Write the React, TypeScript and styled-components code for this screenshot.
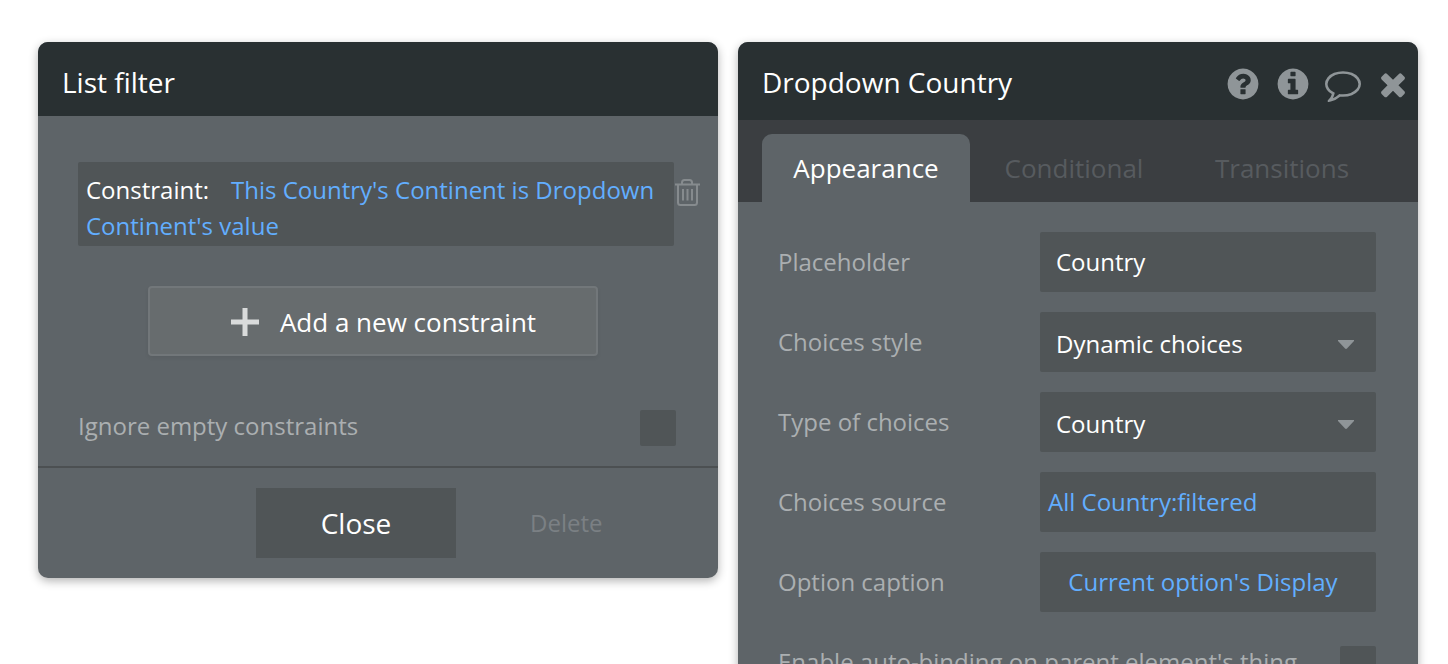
import React from "react";
import styled, { createGlobalStyle } from "styled-components";

const colors = {
  header: "#293032",
  tabs: "#3b3e41",
  panel: "#5e6468",
  field: "#505557",
  link: "#62aeff",
  muted: "#abafb1",
  icon: "#8f9598",
};

const GlobalStyle = createGlobalStyle`
  *, *::before, *::after { box-sizing: border-box; }
  body {
    margin: 0;
    background: #fff;
    font-family: "Open Sans", "Noto Sans", sans-serif;
  }
  button, input, select { font-family: inherit; margin: 0; }
`;

const Page = styled.main`
  display: flex;
  align-items: flex-start;
  gap: 20px;
  height: 100vh;
  padding: 42px 30px 0 38px;
  overflow: hidden;
`;

const Panel = styled.section`
  flex: 1 1 0;
  min-width: 0;
  border-radius: 10px;
  background: ${colors.panel};
  box-shadow: 0 3px 10px rgba(0, 0, 0, 0.3);
  overflow: hidden;
`;

const Header = styled.header<{ $tall?: boolean }>`
  display: flex;
  align-items: flex-start;
  justify-content: space-between;
  height: ${(p) => (p.$tall ? 78 : 74)}px;
  padding: 21px 7px 0 24px;
  background: ${colors.header};
`;

const Title = styled.h2`
  margin: 0;
  color: #fff;
  font-size: 28px;
  font-weight: 400;
  line-height: 38px;
`;

const Actions = styled.div`
  display: flex;
  gap: 14px;
  padding-top: 3px;
`;

const IconButton = styled.button`
  display: flex;
  padding: 0;
  border: 0;
  background: none;
  color: ${colors.icon};
  cursor: pointer;
`;

const FilterBody = styled.div`
  display: flex;
  flex-direction: column;
  padding: 46px 42px 10px 40px;
`;

const ConstraintRow = styled.div`
  display: flex;
  align-items: flex-start;
  margin-right: -24px;
`;

const Constraint = styled.p`
  flex: 1;
  margin: 0;
  padding: 10px 8px 2px;
  border-radius: 2px;
  background: ${colors.field};
  color: #fff;
  font-size: 24px;
  line-height: 36px;
`;

const Expression = styled.a`
  color: ${colors.link};
  text-decoration: none;
`;

const ConstraintLabel = styled.span`
  margin-right: 22px;
`;

const TrashButton = styled(IconButton)`
  margin-top: 16px;
  color: #868b8e;
`;

const AddButton = styled.button`
  display: flex;
  align-items: center;
  justify-content: center;
  gap: 21px;
  width: 450px;
  max-width: 100%;
  height: 70px;
  margin: 40px 0 40px 70px;
  padding: 2px 0 0 21px;
  border: 2px solid #72777a;
  border-radius: 4px;
  background: #676c6e;
  box-shadow: 0 2px 4px rgba(0, 0, 0, 0.06);
  color: #fff;
  font-size: 26px;
  line-height: 36px;
  cursor: pointer;
`;

const Footer = styled.footer`
  display: grid;
  grid-template-columns: 1fr 200px 1fr;
  padding: 20px 64px 20px 20px;
  border-top: 2px solid #4c5052;
`;

const CloseButton = styled.button`
  grid-column: 2;
  height: 70px;
  border: 0;
  background: ${colors.field};
  color: #fff;
  font-size: 28px;
  cursor: pointer;
`;

const DeleteButton = styled.button`
  justify-self: start;
  padding: 0 0 2px 74px;
  border: 0;
  background: none;
  color: #7b8084;
  font-size: 24px;
`;

const Tabs = styled.div`
  display: flex;
  height: 82px;
  padding: 14px 24px 0;
  background: ${colors.tabs};
`;

const Tab = styled.button<{ $active?: boolean }>`
  width: 208px;
  padding: 0;
  border: 0;
  border-radius: 10px 10px 0 0;
  background: ${(p) => (p.$active ? colors.panel : "transparent")};
  color: ${(p) => (p.$active ? "#fff" : "#575b5f")};
  font-size: 26px;
  cursor: pointer;
`;

const Properties = styled.div`
  display: flex;
  flex-direction: column;
  gap: 20px;
  padding: 30px 42px 30px 40px;
`;

const Row = styled.div`
  display: flex;
  align-items: center;
  justify-content: space-between;
  height: 60px;
`;

const Label = styled.label`
  color: ${colors.muted};
  font-size: 24px;
  line-height: 34px;
  white-space: nowrap;
`;

const Field = styled.div`
  position: relative;
  width: 336px;
  height: 60px;
`;

const TextInput = styled.input`
  width: 100%;
  height: 100%;
  padding: 0 16px 2px;
  border: 0;
  border-radius: 2px;
  background: ${colors.field};
  color: #fff;
  font-size: 24px;
`;

const Select = styled.select`
  width: 100%;
  height: 100%;
  padding: 2px 48px 0 16px;
  border: 0;
  border-radius: 2px;
  appearance: none;
  background: ${colors.field};
  color: #fff;
  font-size: 24px;
`;

const Caret = styled.svg`
  position: absolute;
  top: 28px;
  right: 22px;
  pointer-events: none;
`;

const ExpressionField = styled.button<{ $centered?: boolean }>`
  width: 100%;
  height: 100%;
  padding: 0 ${(p) => (p.$centered ? 18 : 8)}px 2px 8px;
  border: 0;
  border-radius: 2px;
  background: ${colors.field};
  color: ${colors.link};
  font-size: 24px;
  text-align: ${(p) => (p.$centered ? "center" : "left")};
  cursor: pointer;
`;

const Checkbox = styled.input`
  width: 36px;
  height: 36px;
  margin-top: 4px;
  border-radius: 2px;
  appearance: none;
  background: ${colors.field};
`;

const iconPaths = {
  help: "M1024 1376v-192q0-14-9-23t-23-9h-192q-14 0-23 9t-9 23v192q0 14 9 23t23 9h192q14 0 23-9t9-23zm256-672q0-88-55.5-163t-138.5-116-170-41q-243 0-371 213-15 24 8 42l132 100q7 6 19 6 16 0 25-12 53-68 86-92 34-24 86-24 48 0 85.5 26t37.5 59q0 38-20 61t-68 45q-63 28-115.5 86.5t-52.5 125.5v36q0 14 9 23t23 9h192q14 0 23-9t9-23q0-19 21.5-49.5t54.5-49.5q32-18 49-28.5t46-35 44.5-48 28-60.5 12.5-81zm384 192q0 209-103 385.5t-279.5 279.5-385.5 103-385.5-103-279.5-279.5-103-385.5 103-385.5 279.5-279.5 385.5-103 385.5 103 279.5 279.5 103 385.5z",
  info: "M1152 1376v-160q0-14-9-23t-23-9h-96v-512q0-14-9-23t-23-9h-320q-14 0-23 9t-9 23v160q0 14 9 23t23 9h96v320h-96q-14 0-23 9t-9 23v160q0 14 9 23t23 9h448q14 0 23-9t9-23zm-128-896v-160q0-14-9-23t-23-9h-192q-14 0-23 9t-9 23v160q0 14 9 23t23 9h192q14 0 23-9t9-23zm640 416q0 209-103 385.5t-279.5 279.5-385.5 103-385.5-103-279.5-279.5-103-385.5 103-385.5 279.5-279.5 385.5-103 385.5 103 279.5 279.5 103 385.5z",
  comment:
    "M896 384q-204 0-381.5 69.5t-282 187.5-104.5 255q0 112 71.5 213.5t201.5 175.5l87 50-27 96q-24 91-70 172 152-63 275-171l43-38 57 6q69 8 130 8 204 0 381.5-69.5t282-187.5 104.5-255-104.5-255-282-187.5-381.5-69.5zm896 512q0 174-120 321.5t-326 233-450 85.5q-70 0-145-8-198 175-460 242-49 14-114 22h-5q-15 0-27-10.5t-16-27.5v-1q-3-4-.5-12t2-10 4.5-9.5l6-9 7-8.5 8-9q7-8 31-34.5t34.5-38 31-39.5 32.5-51 27-59 26-76q-157-89-247.5-220t-90.5-281q0-174 120-321.5t326-233 450-85.5 450 85.5 326 233 120 321.5z",
  close:
    "M1490 1322q0 40-28 68l-136 136q-28 28-68 28t-68-28l-294-294-294 294q-28 28-68 28t-68-28l-136-136q-28-28-28-68t28-68l294-294-294-294q-28-28-28-68t28-68l136-136q28-28 68-28t68 28l294 294 294-294q28-28 68-28t68 28l136 136q28 28 28 68t-28 68l-294 294 294 294q28 28 28 68z",
};

const HeaderAction = ({ name, label }: { name: keyof typeof iconPaths; label: string }) => (
  <IconButton type="button" aria-label={label}>
    <svg width="36" height="36" viewBox="0 0 1792 1792" fill="currentColor" aria-hidden="true">
      <path d={iconPaths[name]} />
    </svg>
  </IconButton>
);

const TrashIcon = () => (
  <svg width="26" height="30" viewBox="0 0 26 30" fill="none" stroke="currentColor" strokeWidth="2" aria-hidden="true">
    <path d="M1 6.5h25M8 6V4.500q0-2.500 2.500-2.500h5q2.500 0 2.500 2.500V6" />
    <path d="M4 7v17.500q0 2.500 2.500 2.500h14q2.500 0 2.500-2.500V7M9 11v11.500M13.500 11v11.500M18 11v11.500" />
  </svg>
);

const PlusIcon = () => (
  <svg width="28" height="28" viewBox="0 0 28 28" fill="#d9dbdb" aria-hidden="true">
    <path d="M11.500 0h5v11.500H28v5H16.500V28h-5V16.500H0v-5h11.500z" />
  </svg>
);

const Dropdown = ({ id, value }: { id: string; value: string }) => (
  <Field>
    <Select id={id} defaultValue={value}>
      <option>{value}</option>
    </Select>
    <Caret width="16" height="9" viewBox="0 0 16 9" fill={colors.icon} aria-hidden="true">
      <path d="M0 0h16v1L9 8.500q-1 .8-2 0L0 1z" />
    </Caret>
  </Field>
);

const App = () => (
  <>
    <GlobalStyle />
    <Page>
      <Panel>
        <Header>
          <Title>List filter</Title>
        </Header>
        <FilterBody>
          <ConstraintRow>
            <Constraint>
              <ConstraintLabel>Constraint:</ConstraintLabel>
              <Expression href="#constraint">This Country's Continent is Dropdown Continent's value</Expression>
            </Constraint>
            <TrashButton type="button" aria-label="Remove constraint">
              <TrashIcon />
            </TrashButton>
          </ConstraintRow>
          <AddButton type="button">
            <PlusIcon />
            Add a new constraint
          </AddButton>
          <Row>
            <Label htmlFor="ignore-empty">Ignore empty constraints</Label>
            <Checkbox id="ignore-empty" type="checkbox" />
          </Row>
        </FilterBody>
        <Footer>
          <CloseButton type="button">Close</CloseButton>
          <DeleteButton type="button">Delete</DeleteButton>
        </Footer>
      </Panel>

      <Panel>
        <Header $tall>
          <Title>Dropdown Country</Title>
          <Actions>
            <HeaderAction name="help" label="Help" />
            <HeaderAction name="info" label="Information" />
            <HeaderAction name="comment" label="Comments" />
            <HeaderAction name="close" label="Close" />
          </Actions>
        </Header>
        <Tabs role="tablist">
          <Tab type="button" role="tab" aria-selected="true" $active>
            Appearance
          </Tab>
          <Tab type="button" role="tab" aria-selected="false">
            Conditional
          </Tab>
          <Tab type="button" role="tab" aria-selected="false">
            Transitions
          </Tab>
        </Tabs>
        <Properties>
          <Row>
            <Label htmlFor="placeholder">Placeholder</Label>
            <Field>
              <TextInput id="placeholder" type="text" defaultValue="Country" />
            </Field>
          </Row>
          <Row>
            <Label htmlFor="choices-style">Choices style</Label>
            <Dropdown id="choices-style" value="Dynamic choices" />
          </Row>
          <Row>
            <Label htmlFor="choices-type">Type of choices</Label>
            <Dropdown id="choices-type" value="Country" />
          </Row>
          <Row>
            <Label htmlFor="choices-source">Choices source</Label>
            <Field>
              <ExpressionField id="choices-source" type="button">
                All Country:filtered
              </ExpressionField>
            </Field>
          </Row>
          <Row>
            <Label htmlFor="option-caption">Option caption</Label>
            <Field>
              <ExpressionField id="option-caption" type="button" $centered>
                Current option's Display
              </ExpressionField>
            </Field>
          </Row>
          <Row>
            <Label htmlFor="auto-binding">Enable auto-binding on parent element's thing</Label>
            <Checkbox id="auto-binding" type="checkbox" />
          </Row>
        </Properties>
      </Panel>
    </Page>
  </>
);

export default App;
